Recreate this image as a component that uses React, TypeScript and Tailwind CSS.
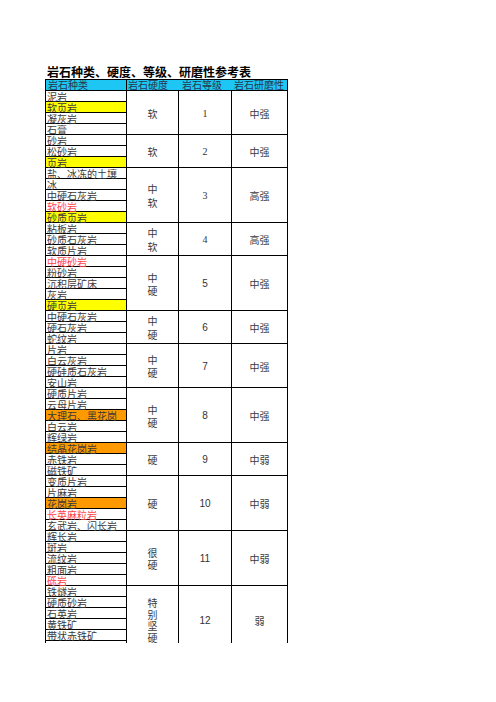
import React from "react";

type Rock = { name: string; bg?: string; red?: boolean };
type Group = {
  hard: string[];
  lead: string;
  level: string;
  serif: boolean;
  wear: string;
  rocks: Rock[];
  open?: boolean;
};

const Y = "bg-[#ffff00]";
const O = "bg-[#ff9900]";

const groups: Group[] = [
  { hard: ["软"], lead: "leading-[13px]", level: "1", serif: true, wear: "中强", rocks: [{ name: "泥岩" }, { name: "软页岩", bg: Y }, { name: "凝灰岩" }, { name: "石膏" }] },
  { hard: ["软"], lead: "leading-[13px]", level: "2", serif: true, wear: "中强", rocks: [{ name: "砂岩" }, { name: "松砂岩" }, { name: "页岩", bg: Y }] },
  { hard: ["中", "软"], lead: "leading-[14px]", level: "3", serif: true, wear: "高强", rocks: [{ name: "盐、冰冻的土壤" }, { name: "冰" }, { name: "中硬石灰岩" }, { name: "软砂岩", red: true }, { name: "砂质页岩", bg: Y }] },
  { hard: ["中", "软"], lead: "leading-[14px]", level: "4", serif: true, wear: "高强", rocks: [{ name: "粘板岩" }, { name: "砂质石灰岩" }, { name: "软质片岩" }] },
  { hard: ["中", "硬"], lead: "leading-[13px]", level: "5", serif: false, wear: "中强", rocks: [{ name: "中硬砂岩", red: true }, { name: "粉砂岩" }, { name: "沉积层矿床" }, { name: "灰岩" }, { name: "硬页岩", bg: Y }] },
  { hard: ["中", "硬"], lead: "leading-[14px]", level: "6", serif: false, wear: "中强", rocks: [{ name: "中硬石灰岩" }, { name: "硬石灰岩" }, { name: "蛇纹岩" }] },
  { hard: ["中", "硬"], lead: "leading-[13px]", level: "7", serif: false, wear: "中强", rocks: [{ name: "片岩" }, { name: "白云灰岩" }, { name: "硬硅质石灰岩" }, { name: "安山岩" }] },
  { hard: ["中", "硬"], lead: "leading-[13px]", level: "8", serif: false, wear: "中强", rocks: [{ name: "硬质片岩" }, { name: "云母片岩" }, { name: "大理石、黑花岗", bg: O }, { name: "白云岩" }, { name: "辉绿岩" }] },
  { hard: ["硬"], lead: "leading-[13px]", level: "9", serif: false, wear: "中弱", rocks: [{ name: "结晶花岗岩", bg: O }, { name: "赤铁岩" }, { name: "磁铁矿" }] },
  { hard: ["硬"], lead: "leading-[13px]", level: "10", serif: false, wear: "中弱", rocks: [{ name: "变质片岩" }, { name: "片麻岩" }, { name: "花岗岩", bg: O }, { name: "长英麻粒岩", red: true }, { name: "玄武岩、闪长岩" }] },
  { hard: ["很", "硬"], lead: "leading-[12px]", level: "11", serif: false, wear: "中弱", rocks: [{ name: "辉长岩" }, { name: "斑岩" }, { name: "流纹岩" }, { name: "粗面岩" }, { name: "砾岩", red: true }] },
  { hard: ["特", "别", "坚", "硬"], lead: "leading-[11.5px]", level: "12", serif: false, wear: "弱", open: true, rocks: [{ name: "铁燧岩" }, { name: "硬质砂岩" }, { name: "石英岩" }, { name: "黄铁矿" }, { name: "带状赤铁矿" }] },
];

const cjk = "font-['SimSun','Noto_Sans_CJK_SC',sans-serif]";

export default function App() {
  return (
    <div className={`w-[496px] h-[702px] bg-white ${cjk}`}>
      <div className="pt-[64px] pl-[45px]">
        <div className="h-[15px] pl-[2px] text-[12px] leading-[15px] font-bold text-black whitespace-nowrap">
          岩石种类、硬度、等级、研磨性参考表
        </div>
        <div className="w-[243px] border-l border-r border-t border-black text-[10px] text-[#3a3a3a]">
          <div className="flex h-[11px] shadow-[inset_0_-1px_0_#000] bg-[#1ec6f4] leading-[10px] text-[#2a3550] whitespace-nowrap">
            <div className="w-[81px] h-[10px] pl-[2px] border-r border-black">岩石种类</div>
            <div className="w-[52px] h-[10px] pl-[1px]">岩石硬度</div>
            <div className="w-[53px] h-[10px] pl-[3px]">岩石等级</div>
            <div className="w-[55px] h-[10px] pl-[2px]">岩石研磨性</div>
          </div>
          {groups.map((g, gi) => (
            <div key={gi} className={`flex ${g.open ? "" : "shadow-[inset_0_-1px_0_#000]"}`}>
              <div className="w-[81px] flex flex-col border-r border-black">
                {g.rocks.map((r, ri) => (
                  <div
                    key={ri}
                    className={`h-[11px] pl-[1px] leading-[11px] whitespace-nowrap shadow-[inset_0_-1px_0_#000] ${r.bg ?? ""} ${r.red ? "text-[#ff4444]" : ""}`}
                  >
                    {r.name}
                  </div>
                ))}
              </div>
              <div
                className={`w-[52px] flex flex-col items-center justify-center border-r border-black ${g.lead} ${g.open ? "pt-[11px]" : ""}`}
              >
                {g.hard.map((h, hi) => (
                  <span key={hi}>{h}</span>
                ))}
              </div>
              <div
                className={`w-[53px] flex items-center justify-center border-r border-black text-[10px] text-[#333] ${g.serif ? "font-['Liberation_Serif',serif]" : "font-['Liberation_Sans',sans-serif]"} ${g.open ? "pt-[11px]" : ""}`}
              >
                {g.level}
              </div>
              <div className={`w-[55px] flex items-center justify-center ${g.open ? "pt-[11px]" : ""}`}>{g.wear}</div>
            </div>
          ))}
        </div>
      </div>
    </div>
  );
}
